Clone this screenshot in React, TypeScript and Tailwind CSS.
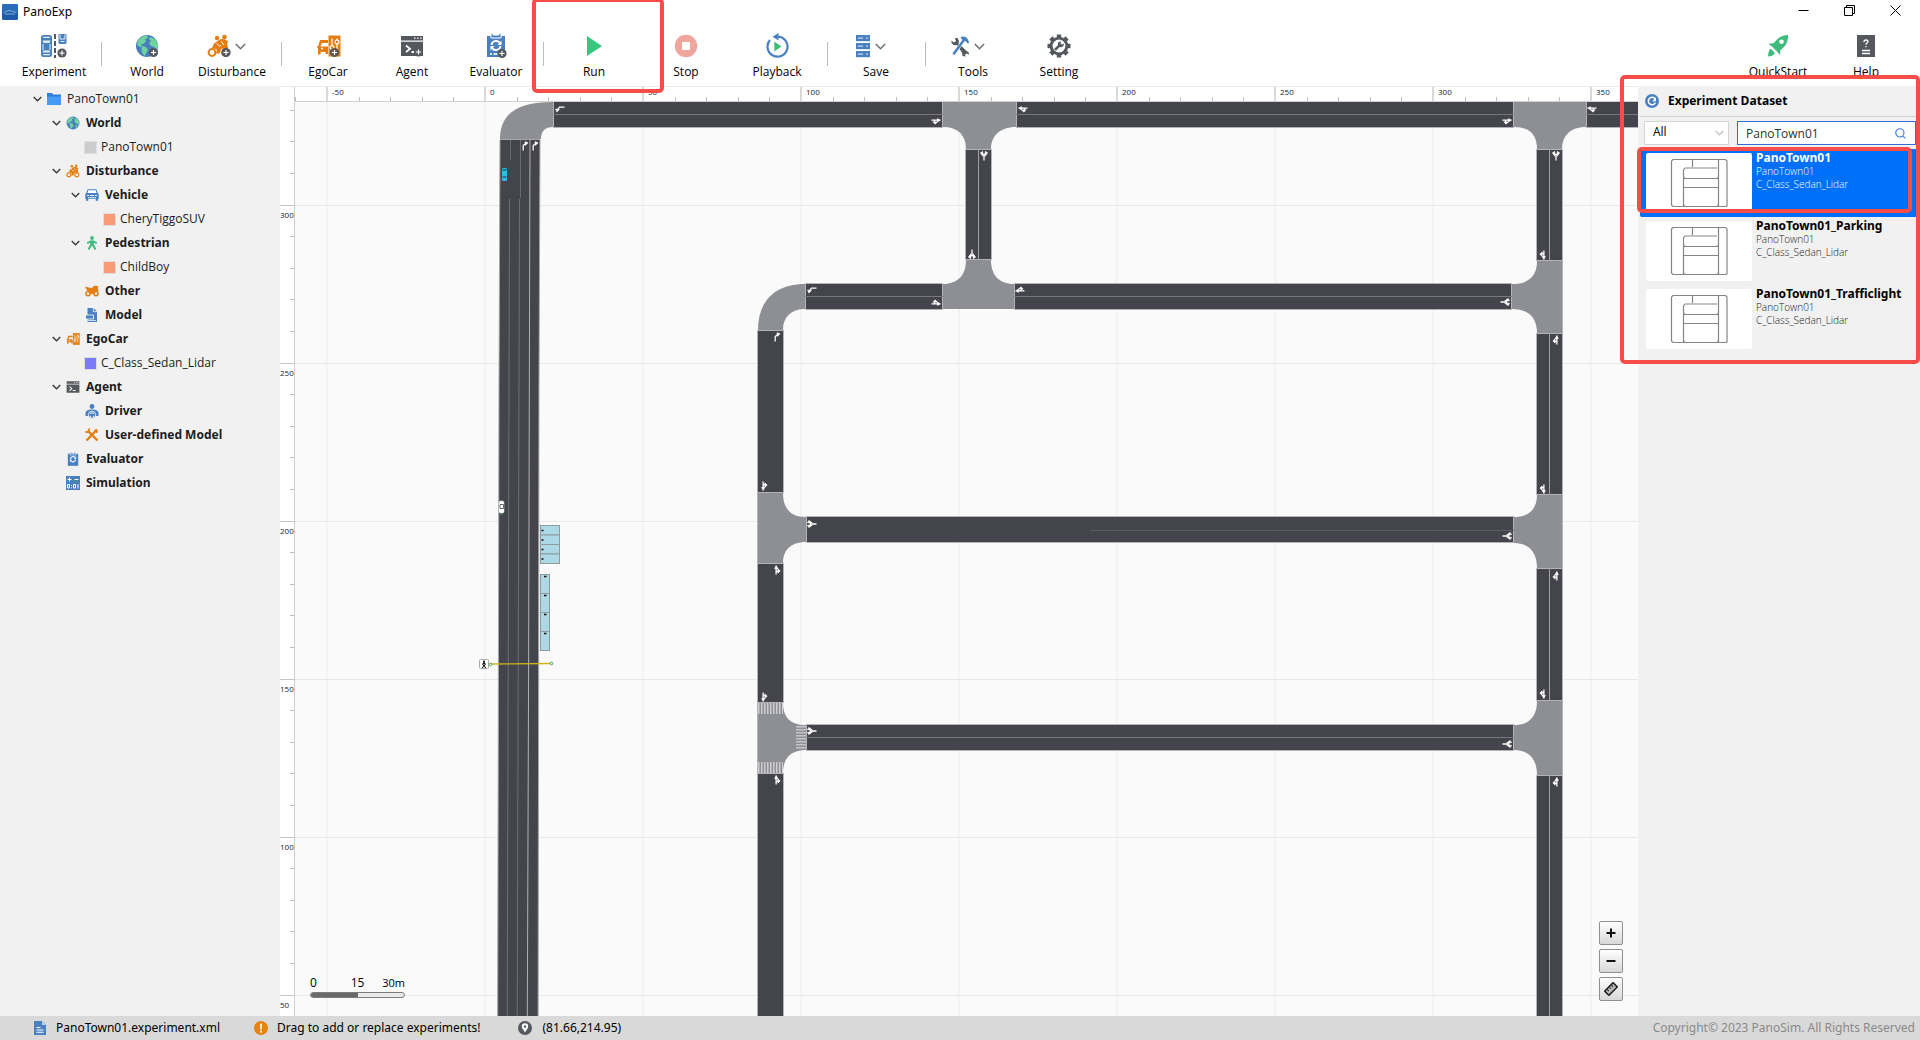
import React, { useState } from "react";

type P = { className?: string };

/* ---------- icons ---------- */

const Badge = ({ x, y }: { x: number; y: number }) => (
  <g>
    <circle cx={x} cy={y} r="4.600" fill="#55585e" />
    <path d={`M${x - 2.6} ${y}h5.200M${x} ${y - 2.6}v5.200`} stroke="#fff" strokeWidth="1.200" />
  </g>
);

const AppLogo = () => (
  <svg viewBox="0 0 16 16" className="size-4">
    <rect width="16" height="16" rx="1.500" fill="#1d5aa8" />
    <rect width="16" height="8" rx="1.500" fill="#2a6cba" />
    <path d="M1.500 9c2-.3 2.500-2 5-2.300 3-.3 4 1.200 8 1.800M3 10h10" stroke="#9fc3ea" strokeWidth=".8" fill="none" />
  </svg>
);

const ExperimentIcon = () => (
  <svg viewBox="0 0 28 26" className="h-[26px] w-7">
    <rect x="1" y="2" width="11" height="22" rx="2.500" fill="#4a80c0" />
    <path d="M3.200 4.300h6.600M3.200 21.700h6.600" stroke="#e4edf7" strokeWidth="1.200" />
    <path d="M2.500 7.500h8l-1 2.500h-6zM2.500 19.500h8l-1-2h-6z" fill="#e4edf7" />
    <path d="M3 11v6M10 11v6" stroke="#e4edf7" strokeWidth="1" />
    <path d="M15 1v24" stroke="#55585e" strokeWidth="2" strokeDasharray="5 2" />
    <path d="M18.500 1h8v8.500a1.500 1.500 0 0 1-1.500 1.500h-5a1.500 1.500 0 0 1-1.500-1.500z" fill="#4a80c0" />
    <path d="M20 1.500v4.500h5V1.500M20.500 8.500h4" stroke="#e4edf7" strokeWidth="1" fill="none" />
    <Badge x={22} y={20} />
  </svg>
);

const GlobeShape = () => (
  <g>
    <circle cx="12" cy="12" r="11" fill="#4a7fbf" />
    <path d="M3 7c2-4 6-5.500 9-5.500l1 2.500-3 1 1 2.500-3 2.500-2 .5 1 2-2 .5-3-2z" fill="#6fd39c" />
    <path d="M15 3l5 2 3 5v4l-2 1-2-2-3-1-2-3 2-2-2-2z" fill="#6fd39c" />
    <path d="M7 12l4 1 2 3-2 3-1 3-3-3-.5-4z" fill="#6fd39c" />
    <path d="M17 15l3 1-2 4-2-1z" fill="#6fd39c" />
  </g>
);
const Globe = ({ className, badge }: P & { badge?: boolean }) => (
  <svg viewBox="0 0 24 24" className={className}>
    <GlobeShape />
    {badge && <Badge x={18.500} y={18.500} />}
  </svg>
);

const Rider = ({ className, badge }: P & { badge?: boolean }) => (
  <svg viewBox="0 0 24 24" className={className}>
    <circle cx="5" cy="18.500" r="3.400" fill="none" stroke="#e47e12" strokeWidth="2" />
    <circle cx="18.500" cy="18.500" r="3.400" fill="none" stroke="#e47e12" strokeWidth="2" />
    <circle cx="10" cy="4" r="2.200" fill="#e47e12" />
    <circle cx="17.500" cy="3" r="2.300" fill="#e47e12" />
    <path d="M12.500 5.500l3-.5 3 .5 3 2.500-1.500 1 1 5-2.500 1.500-4-1-2 5H9l1-4-5-1.500 2-4.500 3-2z" fill="#e47e12" />
    <path d="M9.500 9.500l3 2.500 1.500-.5M14.500 7.500l2 3.500" stroke="#fff" strokeWidth="1" fill="none" />
    {badge && <Badge x={19} y={18.500} />}
  </svg>
);

const Ego = ({ className, badge }: P & { badge?: boolean }) => (
  <svg viewBox="0 0 25 24" className={className}>
    <path d="M4 6h8v3H6l-1.500 3.500H12V20H9.500v-2H4.500v2.500H2V14L.5 12.500l1.800-.6z" fill="#e47e12" />
    <path d="M5 14.500h2" stroke="#fff" strokeWidth="1.500" />
    <path d="M12.500 1.500h12v21h-12z" fill="#e47e12" />
    <path d="M16 4.500v14M21 4.500v14" stroke="#fff" strokeWidth="1.200" />
    <circle cx="16" cy="13.500" r="1.900" fill="#e47e12" stroke="#fff" strokeWidth="1.200" />
    <circle cx="21" cy="8" r="1.900" fill="#e47e12" stroke="#fff" strokeWidth="1.200" />
    {badge && <Badge x={18.500} y={18.500} />}
  </svg>
);

const Agent = ({ className, badge }: P & { badge?: boolean }) => (
  <svg viewBox="0 0 24 24" className={className}>
    <path d="M1 2h22v4.500H1zM1 7.800h22V22H1z" fill="#55585e" />
    <path d="M14 4.200h1.500M17 4.200h1.500M20 4.200h1.500" stroke="#fff" strokeWidth="1.300" />
    <path d="M6 11.500l4 3.300-4 3.300M11.500 18h5" stroke="#fff" strokeWidth="1.800" fill="none" />
    {badge && <Badge x={18.500} y={18} />}
  </svg>
);

const Evaluator = ({ className, badge }: P & { badge?: boolean }) => (
  <svg viewBox="0 0 24 26" className={className}>
    <path d="M3 3h18v21H3z" fill="#4a80c0" />
    <path d="M7 0h2v2h6V0h2v5H7z" fill="#4a80c0" stroke="#fff" strokeWidth="1" />
    <path d="M7.500 12a4.600 4.600 0 0 1 8-2.500M16.500 13a4.600 4.600 0 0 1-8 2.500" stroke="#fff" strokeWidth="1.900" fill="none" />
    <path d="M17.500 7.500v4.500h-4zM6.500 17.500V13h4z" fill="#fff" />
    {badge && <path d="M6 21h2M9.500 21h5" stroke="#fff" strokeWidth="1.600" />}
    {badge && <Badge x={18} y={20.500} />}
  </svg>
);

const RunIcon = () => (
  <svg viewBox="0 0 24 24" className="size-6">
    <path d="M5 2l15 10L5 22z" fill="#35c97e" />
  </svg>
);
const StopIcon = () => (
  <svg viewBox="0 0 24 24" className="size-6">
    <circle cx="12" cy="12" r="11.200" fill="#efa69c" />
    <rect x="8" y="8" width="8" height="8" rx="1" fill="#fff" />
  </svg>
);
const PlaybackIcon = () => (
  <svg viewBox="0 0 24 26" className="h-[26px] w-6">
    <path d="M5 7a10 10 0 1 0 7.500-3.400" stroke="#4a80c0" strokeWidth="2.200" fill="none" />
    <path d="M13.500 0v7.500L7.500 3.800z" fill="#4a80c0" />
    <path d="M9.300 8.500l7.200 5-7.200 5z" fill="#3cbf7b" />
  </svg>
);
const SaveIcon = () => (
  <svg viewBox="0 0 16 24" className="h-6 w-4">
    {[1, 9, 17].map((y) => (
      <g key={y}>
        <rect x="1" y={y} width="14" height="6.200" fill="#4a80c0" />
        <path d={`M3 ${y + 3.100}h5M11 ${y + 3.100}h2`} stroke="#c5d8ee" strokeWidth="1.300" />
      </g>
    ))}
  </svg>
);
const ToolsIcon = () => (
  <svg viewBox="0 0 20 22" className="h-[22px] w-5">
    <path d="M1.500 5.500L4 7.500 6 6 5 3l2.500 0 1.500 3-.5 2 8 8 2 1 .5 3-2-1.500-2 1 .5 2-3-.5-.5-3.500L6.500 10 4 10.200 1.500 8z" fill="#55585e" />
    <path d="M10 2c4-1.800 7-.5 8.500 3l1 3-1.500 1-3-3L4.500 20.500 2 18.500 12 5z" fill="#4a80c0" stroke="#fff" strokeWidth=".7" />
  </svg>
);
const SettingIcon = () => (
  <svg viewBox="0 0 24 24" className="size-6">
    <g fill="#55585e">
      {[0, 45, 90, 135].map((a) => (
        <rect key={a} x="9.800" y=".5" width="4.400" height="23" transform={`rotate(${a} 12 12)`} />
      ))}
      <circle cx="12" cy="12" r="9.300" />
    </g>
    <circle cx="12" cy="12" r="6.400" fill="#fff" />
    <path d="M8 15.800l4.500-4.500" stroke="#55585e" strokeWidth="2.600" />
    <path d="M11 11.500V8.500l3-1.500-.5 2.500 1.500 1 2-1-.5 2.500-2.500 1.500z" fill="#55585e" />
  </svg>
);
const RocketIcon = () => (
  <svg viewBox="0 0 24 24" className="size-6">
    <path d="M22 1c.3 7-2.500 11.500-7.500 15l-.5 5-3-3.500-5-5L2.500 10l5.500-1C12 3.500 16 1.200 22 1z" fill="#3fbb7e" />
    <circle cx="15.500" cy="7.800" r="2.300" fill="#fff" />
    <path d="M4.500 14.500l4.500 4.500c-1.500 2.500-4 3.500-7 3.500 0-3 .8-6 2.500-8z" fill="#3fbb7e" />
  </svg>
);
const HelpIcon = () => (
  <svg viewBox="0 0 20 24" className="h-6 w-5">
    <path d="M1 1h18v22H1z" fill="#55585e" />
    <path d="M8 8.200V7.500c0-2 4-2 4 0 0 1.500-2 1.500-2 3.200M10 12v1.200" stroke="#fff" strokeWidth="1.300" fill="none" />
    <path d="M6 16.500h8M6 19.500h8" stroke="#fff" strokeWidth="1.300" />
  </svg>
);
const Chevron = ({ className }: P) => (
  <svg viewBox="0 0 10 6" className={className} fill="none" stroke="currentColor" strokeWidth="1.400">
    <path d="M.8 .8L5 5 9.200 .8" />
  </svg>
);

const FolderIcon = () => (
  <svg viewBox="0 0 14 12" className="h-3 w-[14px]">
    <path d="M0 0h5l1 1.500h8V12H0z" fill="#2f7ed8" />
    <path d="M0 3.500h14V12H0z" fill="#479bf0" />
  </svg>
);
const CarFront = () => (
  <svg viewBox="0 0 14 12" className="h-3 w-[14px]">
    <path d="M3 .7h8l1.200 3.800H1.800z" fill="#fff" stroke="#4a80c0" strokeWidth="1.100" />
    <path d="M.3 4.500h13.400V10H13v1.800h-2.200V10H3.200v1.800H1V10H.3z" fill="#4a80c0" />
    <path d="M2 6.500h2M10 6.500h2M5 6.500h4M3 8.800h8" stroke="#fff" strokeWidth=".9" />
  </svg>
);
const Walker = () => (
  <svg viewBox="0 0 14 14" className="size-[14px]" stroke="#3fbb7e" fill="none">
    <circle cx="7" cy="2" r="1.900" fill="#3fbb7e" stroke="none" />
    <path d="M7 4.500V9" strokeWidth="3.600" />
    <path d="M6.500 5.200L2.200 7.200M7.500 5.200l4.300 2M6.300 8.500L3.500 13.500M7.700 8.500l2.800 5" strokeWidth="2" />
  </svg>
);
const Moto = () => (
  <svg viewBox="0 0 14 12" className="h-3 w-[14px]">
    <circle cx="3" cy="8.600" r="2.100" fill="none" stroke="#e47e12" strokeWidth="1.500" />
    <circle cx="11" cy="8.600" r="2.100" fill="none" stroke="#e47e12" strokeWidth="1.500" />
    <path d="M0 1.500l3.500 1L7 3l2-2.300 4.500 .3-.8 2 1 3-3 1L9 9H5L2 5.500z" fill="#e47e12" />
  </svg>
);
const ModelIcon = () => (
  <svg viewBox="0 0 14 14" className="size-[14px]">
    <path d="M2.500 0h6L12 3.500V14H2.500z" fill="#4a80c0" />
    <path d="M8.300 0v3.700H12" stroke="#fff" strokeWidth=".8" fill="none" />
    <path d="M.5 7h8v4h-8z" fill="#4a80c0" stroke="#fff" strokeWidth=".8" />
    <path d="M2.500 12.500H11" stroke="#fff" strokeWidth=".7" />
  </svg>
);
const DriverIcon = () => (
  <svg viewBox="0 0 14 15" className="h-[15px] w-[14px]">
    <circle cx="7" cy="2.500" r="2.400" fill="#4a80c0" />
    <path d="M.5 12V9.500C.5 6.500 3 5.500 7 5.500s6.500 1 6.500 4V12z" fill="#4a80c0" />
    <circle cx="7" cy="10.700" r="3.600" fill="#4a80c0" stroke="#fff" strokeWidth=".8" />
    <path d="M5 9.500c1.200-.8 2.800-.8 4 0M5 12l1.200.8M9 12l-1.200.8" stroke="#fff" strokeWidth="1" fill="none" />
  </svg>
);
const CrossTools = () => (
  <svg viewBox="0 0 14 14" className="size-[14px]" stroke="#e47e12" fill="none">
    <path d="M3 3l9.500 9.500" strokeWidth="2.400" />
    <path d="M12 1.500l-10.500 11" strokeWidth="2.400" />
    <path d="M.5 3.500c1.500 1.500 4 0 3.500-3M10 2l2.500 2.500" strokeWidth="1.800" />
  </svg>
);
const SimIcon = () => (
  <svg viewBox="0 0 14 14" className="size-[14px]">
    <path d="M0 0h14v14H0z" fill="#4a80c0" />
    <path d="M1.500 3.500h4M3.500 1.500v4M8.500 3.500h4" stroke="#fff" strokeWidth="1" />
    <path d="M1.500 8.500h2v3.500h-2zM7.500 8.500h2v3.500h-2zM12 8v4.500M5.500 9v1M5.500 11.300v1" stroke="#fff" strokeWidth="1" fill="none" />
  </svg>
);

/* ---------- toolbar ---------- */

const Tool = ({ label, icon, drop, width, children }: { label: string; icon: React.ReactNode; drop?: boolean; width: string; children?: React.ReactNode }) => (
  <div className={"relative shrink-0 " + width}>
    <button className="flex w-full flex-col items-center">
      <span className={"flex h-7 items-center justify-center gap-1 " + (drop ? "pr-3" : "")}>
        {icon}
        {drop && <Chevron className="h-[7px] w-[11px] text-[#6b6e73]" />}
      </span>
      <span className="mt-1 text-xs leading-4">{label}</span>
    </button>
    {children}
  </div>
);
const Sep = () => (
  <div className="flex h-[26px] w-[10px] shrink-0 justify-center">
    <div className="mt-[10px] h-6 w-px shrink-0 bg-[#b9bdc6]" />
  </div>
);

/* ---------- tree ---------- */

const Square = ({ color }: { color: string }) => <span className={"size-[11px] outline outline-1 outline-[#dedede] " + color} />;

type Node = { level: number; label: string; icon: React.ReactNode; bold?: boolean; open?: boolean };
const tree: Node[] = [
  { level: 0, label: "PanoTown01", icon: <FolderIcon />, open: true },
  { level: 1, label: "World", icon: <Globe className="size-[14px]" />, bold: true, open: true },
  { level: 2, label: "PanoTown01", icon: <Square color="bg-[#cccccc]" /> },
  { level: 1, label: "Disturbance", icon: <Rider className="size-[14px]" />, bold: true, open: true },
  { level: 2, label: "Vehicle", icon: <CarFront />, bold: true, open: true },
  { level: 3, label: "CheryTiggoSUV", icon: <Square color="bg-[#fa9b78]" /> },
  { level: 2, label: "Pedestrian", icon: <Walker />, bold: true, open: true },
  { level: 3, label: "ChildBoy", icon: <Square color="bg-[#fa9b78]" /> },
  { level: 2, label: "Other", icon: <Moto />, bold: true },
  { level: 2, label: "Model", icon: <ModelIcon />, bold: true },
  { level: 1, label: "EgoCar", icon: <Ego className="size-[14px]" />, bold: true, open: true },
  { level: 2, label: "C_Class_Sedan_Lidar", icon: <Square color="bg-[#7b7bf8]" /> },
  { level: 1, label: "Agent", icon: <Agent className="size-[14px]" />, bold: true, open: true },
  { level: 2, label: "Driver", icon: <DriverIcon />, bold: true },
  { level: 2, label: "User-defined Model", icon: <CrossTools />, bold: true },
  { level: 1, label: "Evaluator", icon: <Evaluator className="size-[15px]" />, bold: true },
  { level: 1, label: "Simulation", icon: <SimIcon />, bold: true },
];
const indent = ["pl-[33px]", "pl-[52px]", "pl-[71px]", "pl-[90px]"];

const Tree = () => (
  <ul className="w-[280px] shrink-0 overflow-hidden bg-[#f1f1f1] pt-px text-[#1c1c1c]">
    {tree.map((n, i) => (
      <li key={i} className={"flex h-6 items-center " + indent[n.level]}>
        {n.open ? (
          <button aria-label={"Collapse " + n.label} className="mr-1 w-[10px] shrink-0">
            <Chevron className="h-[6px] w-[9px] text-[#333]" />
          </button>
        ) : (
          <span className="mr-1 w-[10px] shrink-0" />
        )}
        <span className={"flex items-center " + (n.level > 1 && !n.bold ? "mr-[5px]" : "mr-[6px] w-[14px]")}>{n.icon}</span>
        <span className={"text-xs whitespace-nowrap " + (n.bold ? "font-['Noto_Sans',sans-serif] font-bold" : "")}>{n.label}</span>
      </li>
    ))}
  </ul>
);

/* ---------- map ---------- */

const ASPHALT = "#44444c";
const JUNCTION = "#8e8f94";

const hRoads: [number, number, number, boolean][] = [
  [553, 943, 102, true],
  [1016, 1514, 102, true],
  [1586, 1660, 102, true],
  [805, 943, 284, true],
  [1014, 1512, 284, true],
  [806, 1514, 517, false],
  [806, 1514, 725, true],
];
const vRoads: [number, number, number, boolean][] = [
  [966, 149, 260, true],
  [758, 330, 493, false],
  [758, 563, 703, false],
  [758, 773, 1100, false],
  [1537, 149, 261, true],
  [1537, 333, 495, true],
  [1537, 568, 701, true],
  [1537, 775, 1100, true],
];
const junctions = [
  "M500 139C500 113 518 102 553 102V127C545 127 541 131 541 139Z",
  "M943 102H1016V127C999 127 991 137 991 149H966C966 135 958 127 943 127Z",
  "M943 309V284C958 284 966 275 966 260H991C991 275 999 284 1014 284V309Z",
  "M758 330C758 302 774 284 805 284V309C791 309 783 317 783 330Z",
  "M758 493H783C783 508 790 517 806 517V542C790 542 783 551 783 563H758Z",
  "M758 703H783C783 717 790 725 806 725V750C790 750 783 759 783 773H758Z",
  "M1514 102H1586V127C1570 127 1562 136 1562 149H1537C1537 134 1529 127 1514 127Z",
  "M1562 261H1537C1537 276 1529 284 1512 284V309C1529 309 1537 318 1537 333H1562Z",
  "M1562 495H1537C1537 509 1529 517 1514 517V543C1529 543 1537 552 1537 568H1562Z",
  "M1562 701H1537C1537 717 1529 725 1514 725V750C1529 750 1537 759 1537 775H1562Z",
];

/* lane arrows, drawn heading up and centred on the origin */
const arrowShapes = {
  turn: (
    <g>
      <path d="M-2 5V-.5L1 -3" />
      <path d="M0 -5L3.500 -3.500 .5 -.5Z" fill="#fff" strokeWidth=".5" />
    </g>
  ),
  tee: (
    <g>
      <path d="M0 5V-1.500L-2.500 -2.500M0 -1.500L2.500 -2.500" />
      <path d="M-4 -3.500L-1.500 -5-1 .5ZM4 -3.500L1.500 -5 1 .5Z" fill="#fff" strokeWidth=".8" />
    </g>
  ),
  fork: (
    <g>
      <path d="M-1 5V-3M-1 1.500H2" />
      <path d="M-1 -5L1 -1.500H-2.500ZM3.500 1L1 -1.500V3.500Z" fill="#fff" strokeWidth=".8" />
    </g>
  ),
};
/* [kind, x, y, rotation, mirrored] */
const arrows: [keyof typeof arrowShapes, number, number, number, boolean][] = [
  ["turn", 560, 109, -90, true],
  ["turn", 525, 146, 0, false],
  ["turn", 535, 146, 0, false],
  ["fork", 936, 121, 90, false],
  ["fork", 1023, 109, -90, true],
  ["tee", 984, 156, 0, false],
  ["tee", 972, 254, 180, false],
  ["turn", 812, 290, -90, true],
  ["turn", 777, 337, 0, false],
  ["fork", 936, 303, 90, true],
  ["fork", 1020, 290, -90, false],
  ["fork", 764, 486, 180, true],
  ["tee", 812, 524, -90, false],
  ["tee", 1507, 536, 90, false],
  ["tee", 1505, 302, 90, false],
  ["fork", 1507, 121, 90, false],
  ["fork", 1592, 109, -90, true],
  ["tee", 1556, 156, 0, false],
  ["fork", 1543, 255, 180, false],
  ["fork", 1556, 340, 0, true],
  ["fork", 1543, 489, 180, false],
  ["fork", 1556, 576, 0, true],
  ["fork", 1543, 694, 180, false],
  ["fork", 1556, 782, 0, true],
  ["fork", 777, 570, 0, false],
  ["fork", 764, 697, 180, true],
  ["fork", 777, 780, 0, false],
  ["tee", 812, 731, -90, false],
  ["tee", 1507, 744, 90, false],
];

const range = (n: number) => Array.from({ length: n }, (_, i) => i);

const RoadMap = () => (
  <svg className="absolute inset-0 h-full w-full" fontFamily="'Open Sans', sans-serif" fontSize="8">
    <g transform="translate(-280 -86)">
      <rect x="295" y="101" width="2000" height="1500" fill="#fafafa" />
      {range(12).map((i) => (
        <rect key={i} x={326 + i * 158} y="101" width="2" height="1500" fill="#f3f3f3" />
      ))}
      {range(9).map((i) => (
        <rect key={i} x="295" y={205 + i * 158} width="2000" height="1" fill="#e8e8e8" />
      ))}

      {junctions.map((d) => (
        <path key={d} d={d} fill={JUNCTION} />
      ))}
      {hRoads.map(([x1, x2, y, mid]) => (
        <g key={`${x1}-${y}`}>
          <rect x={x1} y={y} width={x2 - x1} height="25" fill={ASPHALT} />
          <path d={`M${x1} ${y - 0.500}H${x2}M${x1} ${y + 25.500}H${x2}M${x1 + 0.500} ${y}v25M${x2 - 0.500} ${y}v25`} stroke="#b4b4b8" />
          {mid && <path d={`M${x1} ${y + 12.500}H${x2}`} stroke="#77777d" />}
        </g>
      ))}
      <path d="M1090 530.500H1514" stroke="#5c5c64" />
      {vRoads.map(([x, y1, y2, mid]) => (
        <g key={`${x}-${y1}`}>
          <rect x={x} y={y1} width="25" height={y2 - y1} fill={ASPHALT} />
          <path d={`M${x - 0.500} ${y1}V${y2}M${x + 25.500} ${y1}V${y2}M${x} ${y1 + 0.500}h25M${x} ${y2 - 0.500}h25`} stroke="#b4b4b8" />
          {mid && <path d={`M${x + 12.500} ${y1}V${y2}`} stroke="#a2a2a6" />}
        </g>
      ))}
      <path d="M1562.500 261V1100M757.500 493V563M757.500 703V773" stroke="#b4b4b8" />

      {/* four-lane avenue */}
      <path d="M500 139.500H540L539 386 538.500 760 538 1100H497.500L499 386Z" fill={ASPHALT} stroke="#a6a6aa" />
      <path d="M510.500 140V160M520.500 140V198" stroke="#68686f" />
      <path d="M509.500 199L507 1100M519.500 199L517 1100" stroke="#6f6f76" fill="none" />
      <path d="M530 140L528.500 700 527 1100" stroke="#b0b0b4" fill="none" />

      {/* crosswalks */}
      <path d="M758 708.500H783M758 767.500H783" stroke="#cdcdd0" strokeWidth="11" strokeDasharray="1.500 1.500" />
      <path d="M801 726V750" stroke="#c4c4c8" strokeWidth="10" strokeDasharray="1.500 1.500" />

      <g stroke="#fff" strokeWidth="1.400" fill="none">
        {arrows.map(([kind, x, y, rot, flip]) => (
          <g key={`${x}-${y}`} transform={`translate(${x} ${y}) rotate(${rot}) scale(${flip ? -0.900 : 0.900} .9)`}>
            {arrowShapes[kind]}
          </g>
        ))}
      </g>

      {/* vehicles */}
      <rect x="502" y="168" width="5" height="13" rx="1.500" fill="#29bdf0" />
      <path d="M502.500 170h4M502.500 177h4" stroke="#1f5d78" strokeWidth="1.500" />
      <rect x="499" y="501" width="5" height="12" rx="1.500" fill="#fff" stroke="#ddd" strokeWidth=".5" />
      <path d="M500 504.500h3.500v4H500z" fill="none" stroke="#44444c" strokeWidth=".8" />
      <circle cx="501.500" cy="514" r="1" fill="#3fa34d" />

      {/* parking bays */}
      {range(4).map((i) => (
        <g key={i}>
          <rect x="540.500" y={525.500 + i * 9.500} width="19" height="9.500" fill="#add8e6" stroke="#8d9a9f" />
          <path d={`M541.500 ${530.500 + i * 9.500}h2`} stroke="#111" strokeWidth="1.500" />
          <rect x="540.500" y={574.500 + i * 19} width="9" height="19" fill="#add8e6" stroke="#8d9a9f" />
          <path d={`M544 ${576.500 + i * 19}h2.500`} stroke="#111" strokeWidth="1.500" />
        </g>
      ))}

      {/* pedestrian path */}
      <path d="M490 664L551 663.500" stroke="#c9b21c" strokeWidth="1.300" />
      <circle cx="490.500" cy="664.500" r="1.300" fill="#fff" stroke="#3fa34d" />
      <circle cx="551.500" cy="663.500" r="1.300" fill="#fff" stroke="#3fa34d" />
      <rect x="479.500" y="659.500" width="9" height="9" rx="1" fill="#fff" stroke="#aaa" />
      <circle cx="484" cy="661.500" r="1" />
      <path d="M484 662V665.500M482 664.500L484 663 486 664.500M484 665L482.500 668M484 665L485.500 668" stroke="#000" fill="none" />

      {/* rulers */}
      <path d="M280 86H2300V101H295V1600H280Z" fill="#fff" />
      <path d="M280 86.500H2300" stroke="#ebebeb" />
      <path d="M295 101.500H2300M294.500 87V1600" stroke="#cfcfcf" />
      {range(60).map((i) => (
        <path key={i} d={`M${Math.round(295.400 + i * 31.600)}.5 97V101M290 ${Math.round(109.700 + i * 31.600)}.5H294`} stroke="#bdbdbd" />
      ))}
      {range(9).map((i) => (
        <g key={i}>
          <rect x={326 + i * 158} y="87" width="2" height="14" fill="#d9d9d9" />
          <text x={332 + i * 158} y="95" fill="#1a1a1a">{-50 + i * 50}</text>
        </g>
      ))}
      {range(6).map((i) => (
        <g key={i}>
          <rect x="280" y={205 + i * 158} width="14" height="1" fill="#c4c4c4" />
          <text x="280" y={218 + i * 158} fill="#1a1a1a">{300 - i * 50}</text>
        </g>
      ))}
    </g>
  </svg>
);

const MapButton = ({ label, children }: { label: string; children: React.ReactNode }) => (
  <button aria-label={label} className="flex size-6 items-center justify-center rounded-[2px] border border-[#8f8f8f] bg-linear-to-b from-white to-[#d8d8d8]">
    <svg viewBox="0 0 14 14" className="size-[14px]">{children}</svg>
  </button>
);

/* ---------- dataset panel ---------- */

const Thumb = () => (
  <svg viewBox="0 0 106 60" className="h-[60px] w-[106px] shrink-0 rounded-[2px] bg-white" fill="none" stroke="#858585" strokeWidth="1.200">
    <path d="M27 6.500H79.500L81 8V53L79.500 53.500H27L25.500 52V8Z" />
    <path d="M37.500 53V17L39 15H71M46.500 7V14M38 25.500H72M38 34.500H72M72.500 7V53" />
    <path d="M38 51.500l1.500 2M72 51.500l-1.500 2M72 24l-1.500 1.500M38 24l1.500 1.500" strokeWidth=".8" />
  </svg>
);

const datasets = ["PanoTown01", "PanoTown01_Parking", "PanoTown01_Trafficlight"];

const Datasets = () => {
  const [query, setQuery] = useState("PanoTown01");
  return (
    <aside className="relative z-20 w-[282px] shrink-0 bg-[#f1f1f1] pr-[3px] pl-0.5">
      <div className="flex h-[31px] items-center gap-[9px] border-b border-[#d0d0d0] pl-[5px]">
        <svg viewBox="0 0 14 14" className="size-[14px]">
          <circle cx="7" cy="7" r="7" fill="#4a80c0" />
          <path d="M9.800 4.600A3.700 3.700 0 1 0 10.400 8.600" stroke="#fff" strokeWidth="1.500" fill="none" />
          <path d="M11 3.300v3.900H7.300z" fill="#fff" />
        </svg>
        <h2 className="text-xs font-bold">Experiment Dataset</h2>
      </div>
      <div className="flex gap-2 pt-1 pr-px pl-1">
        <div className="relative w-[85px]">
          <select aria-label="Category" className="block h-6 w-full appearance-none border border-[#d4d4d4] bg-white pb-0.5 pl-2 text-xs">
            <option>All</option>
          </select>
          <Chevron className="pointer-events-none absolute top-[9px] right-[5px] h-[6px] w-[9px] text-[#c4c4c4]" />
        </div>
        <div className="relative flex-1">
          <input
            aria-label="Search experiments"
            value={query}
            onChange={(e) => setQuery(e.target.value)}
            className="block h-6 w-full border border-[#2e6fd8] bg-white pl-2 text-xs text-[#333] outline-none"
          />
          <svg viewBox="0 0 12 12" className="absolute top-[7px] right-[10px] size-[11px]" fill="none" stroke="#3d7be0" strokeWidth="1.200">
            <circle cx="5.300" cy="5.300" r="4.500" />
            <path d="M8.800 8.800l2.500 2.500" />
          </svg>
        </div>
      </div>
      <ul className="pt-1">
        {datasets.map((d, i) => (
          <li key={d} className={"relative flex h-[68px] gap-1 rounded-[2px] px-[6px] pt-1 " + (i === 0 ? "bg-[#0070f8] text-white" : "text-[#222]")}>
            <Thumb />
            <div className="whitespace-nowrap">
              <h3 className={"-mt-0.5 font-['Noto_Sans',sans-serif] text-xs leading-[14px] font-bold " + (i === 0 ? "" : "text-black")}>{d}</h3>
              <p className="text-[10px] leading-[13px] font-light">PanoTown01</p>
              <p className="text-[10px] leading-[13px] font-light">C_Class_Sedan_Lidar</p>
            </div>
            {i === 0 && <div className="pointer-events-none absolute -top-0.5 right-[5px] bottom-1 -left-[3px] rounded-[5px] border-4 border-[#f84c48]" />}
          </li>
        ))}
      </ul>
      <div className="pointer-events-none absolute -top-[11px] right-0 -left-[18px] h-[289px] rounded-[5px] border-4 border-[#f84c48]" />
    </aside>
  );
};

/* ---------- page ---------- */

export default function App() {
  return (
    <div className="flex h-screen flex-col overflow-hidden bg-white font-['Open_Sans','Noto_Sans',sans-serif] text-black">
      <header className="flex h-6 shrink-0 items-center pr-0.5 pl-0.5">
        <AppLogo />
        <h1 className="ml-[5px] font-['Noto_Sans',sans-serif] text-xs">PanoExp</h1>
        <div className="ml-auto flex self-start">
          {[
            ["Minimize", "M.5 5.500h10"],
            ["Restore", "M.5 2.500h8v8h-8zM2.500 2.500v-2h8v8h-2"],
            ["Close", "M.5 .5l10 10M10.500 .5l-10 10"],
          ].map(([label, d]) => (
            <button key={label} aria-label={label} className="flex h-[21px] w-[46px] items-center justify-center">
              <svg viewBox="0 0 11 11" className="size-[11px]" fill="none" stroke="#000">
                <path d={d} />
              </svg>
            </button>
          ))}
        </div>
      </header>

      <nav className="relative z-10 flex h-[62px] shrink-0 pt-2 pr-[10px] pl-3">
        <Tool width="w-[84px]" label="Experiment" icon={<ExperimentIcon />} />
        <Sep />
        <Tool width="w-[82px]" label="World" icon={<Globe className="size-6" badge />} />
        <Tool width="w-[88px]" label="Disturbance" icon={<Rider className="size-6" badge />} drop />
        <Sep />
        <Tool width="w-[84px]" label="EgoCar" icon={<Ego className="h-6 w-[25px]" badge />} />
        <Tool width="w-[84px]" label="Agent" icon={<Agent className="size-6" badge />} />
        <Tool width="w-[84px]" label="Evaluator" icon={<Evaluator className="h-[26px] w-6" badge />} />
        <Sep />
        <Tool width="w-[92px]" label="Run" icon={<RunIcon />}>
          <div className="pointer-events-none absolute -top-[34px] -right-6 -left-4 h-[95px] rounded-[5px] border-4 border-[#f84c48]" />
        </Tool>
        <Tool width="w-[92px]" label="Stop" icon={<StopIcon />} />
        <Tool width="w-[90px]" label="Playback" icon={<PlaybackIcon />} />
        <Sep />
        <Tool width="w-[88px]" label="Save" icon={<SaveIcon />} drop />
        <Sep />
        <Tool width="w-[86px]" label="Tools" icon={<ToolsIcon />} drop />
        <Tool width="w-[86px]" label="Setting" icon={<SettingIcon />} />
        <div className="flex-1" />
        <Tool width="w-[88px]" label="QuickStart" icon={<RocketIcon />} />
        <Tool width="w-[88px]" label="Help" icon={<HelpIcon />} />
      </nav>

      <main className="flex min-h-0 flex-1">
        <Tree />
        <section aria-label="Map" className="relative min-w-0 flex-1 overflow-hidden">
          <RoadMap />
          <div className="absolute bottom-[18px] left-[30px] w-[95px] text-xs">
            <div className="flex h-[14px] items-center justify-between leading-[14px]">
              <span>0</span>
              <span className="pl-4">15</span>
              <span className="text-[11px]">30m</span>
            </div>
            <div className="mt-0.5 h-[6px] overflow-hidden rounded-full border border-[#7d7d7d] bg-[#eaeaea]">
              <div className="h-full w-1/2 bg-[#696969]" />
            </div>
          </div>
          <div className="absolute right-[15px] bottom-[15px] flex flex-col gap-1">
            <MapButton label="Zoom in">
              <path d="M7 2.500v9M2.500 7h9" stroke="#111" strokeWidth="2" />
            </MapButton>
            <MapButton label="Zoom out">
              <path d="M2.500 7h9" stroke="#111" strokeWidth="2" />
            </MapButton>
            <MapButton label="Measure">
              <g transform="rotate(-45 7 7)">
                <rect x="1" y="4" width="12" height="6" fill="#bbb" stroke="#222" strokeWidth="1.600" />
                <path d="M4 4.500v2.500M7 4.500v2.500M10 4.500v2.500" stroke="#222" />
              </g>
            </MapButton>
          </div>
        </section>
        <Datasets />
      </main>

      <footer className="flex h-6 shrink-0 items-center bg-[#d9d9d9] pr-[5px] pl-[34px] font-['Noto_Sans',sans-serif] text-xs whitespace-nowrap">
        <svg viewBox="0 0 12 14" className="h-[14px] w-3">
          <path d="M0 0h8l4 4v10H0z" fill="#4a80c0" />
          <path d="M8 0v4h4z" fill="#b5cfec" />
          <path d="M2.500 6.500h4M2.500 9h7M2.500 11.300h7" stroke="#fff" strokeWidth="1.100" />
        </svg>
        <span className="ml-[10px]">PanoTown01.experiment.xml</span>
        <svg viewBox="0 0 14 14" className="ml-[34px] size-[14px]">
          <circle cx="7" cy="7" r="7" fill="#e8820e" />
          <path d="M7 2.500v6M7 9.800v1.900" stroke="#fff" strokeWidth="1.700" />
        </svg>
        <span className="ml-[9px]">Drag to add or replace experiments!</span>
        <svg viewBox="0 0 14 14" className="ml-[37px] size-[14px]">
          <circle cx="7" cy="7" r="7" fill="#55585e" />
          <path d="M7 2.300a3.200 3.200 0 0 1 3.200 3.200c0 2-1.700 3-3.200 6-1.500-3-3.200-4-3.200-6A3.200 3.200 0 0 1 7 2.300z" fill="#fff" />
          <circle cx="7" cy="5.500" r="1.200" fill="#55585e" />
        </svg>
        <span className="ml-[11px]">(81.66,214.95)</span>
        <span className="ml-auto text-[#8a8a8a]">Copyright© 2023 PanoSim. All Rights Reserved</span>
      </footer>
    </div>
  );
}
